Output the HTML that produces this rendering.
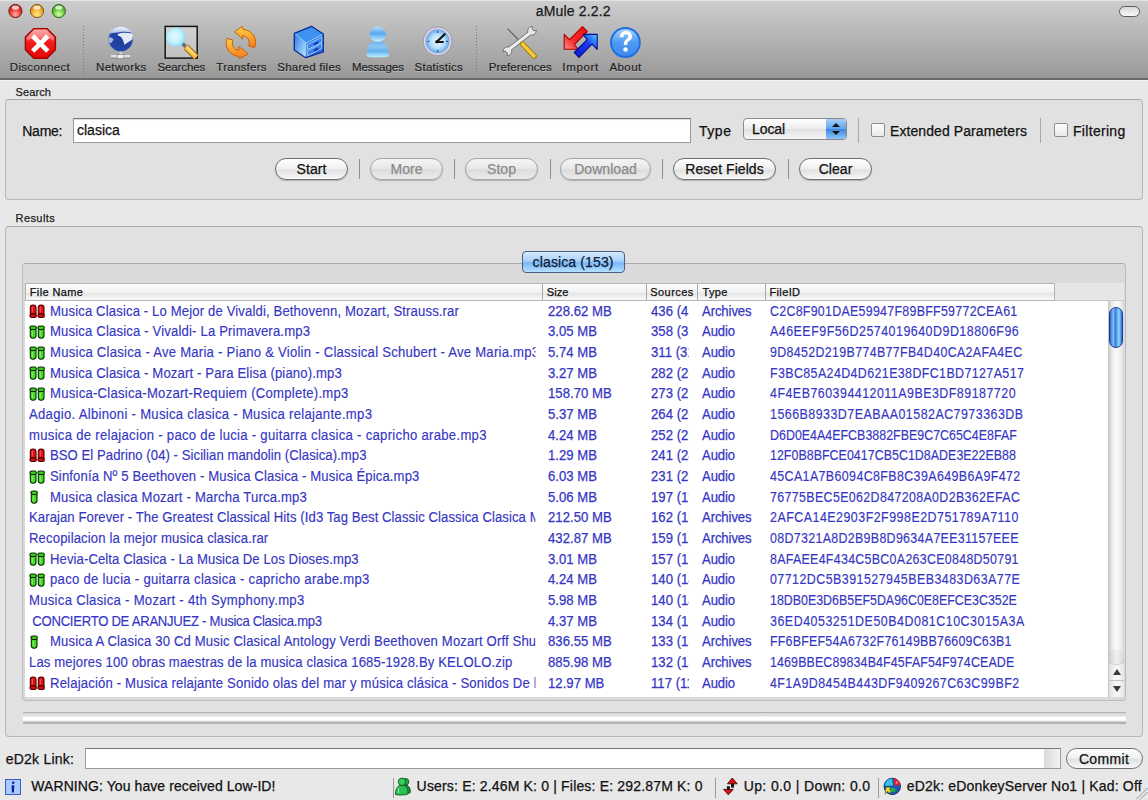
<!DOCTYPE html><html><head><meta charset="utf-8"><style>
*{box-sizing:border-box}
html,body{margin:0;padding:0}
body{width:1148px;height:800px;overflow:hidden;position:relative;background:#e8e8e8;font-family:"Liberation Sans",sans-serif}
.t{position:absolute;white-space:pre;line-height:normal;-webkit-text-stroke:0.25px currentColor}
.a{position:absolute}
</style></head><body>

<div class="a" style="left:0;top:0;width:1148px;height:78px;background:linear-gradient(#cdcdcd,#c3c3c3 20%,#a9a9a9 70%,#989898)"></div>
<div class="a" style="left:0;top:0;width:1148px;height:1px;background:#e4e4e4"></div>
<div class="a" style="left:0;top:78px;width:1148px;height:2px;background:#6a6a6a"></div>
<div class="a" style="left:0;top:80px;width:1148px;height:1px;background:#f2f2f2"></div>
<div class="t" style="left:535.80px;top:2.63px;font-size:14px;color:#1a1a1a;letter-spacing:0.170px;">aMule 2.2.2</div>
<svg class="a" style="left:0;top:0" width="80" height="22" viewBox="0 0 80 22"><defs><radialGradient id="tl1" cx="0.5" cy="0.75" r="0.7"><stop offset="0" stop-color="#ffb0a8"/><stop offset="0.55" stop-color="#e84038"/><stop offset="1" stop-color="#b81818"/></radialGradient><radialGradient id="tl2" cx="0.5" cy="0.75" r="0.7"><stop offset="0" stop-color="#ffe6a0"/><stop offset="0.55" stop-color="#f2b030"/><stop offset="1" stop-color="#d07a10"/></radialGradient><radialGradient id="tl3" cx="0.5" cy="0.75" r="0.7"><stop offset="0" stop-color="#d8ffb0"/><stop offset="0.55" stop-color="#72cc40"/><stop offset="1" stop-color="#3a9a18"/></radialGradient></defs><circle cx="15.4" cy="11" r="6.6" fill="url(#tl1)" stroke="#7a1a1a" stroke-width="1"/><ellipse cx="15.4" cy="7.6" rx="3.6" ry="2.2" fill="#fff" opacity="0.75"/><circle cx="37.0" cy="11" r="6.6" fill="url(#tl2)" stroke="#8a5a10" stroke-width="1"/><ellipse cx="37.0" cy="7.6" rx="3.6" ry="2.2" fill="#fff" opacity="0.75"/><circle cx="58.8" cy="11" r="6.6" fill="url(#tl3)" stroke="#2a6a18" stroke-width="1"/><ellipse cx="58.8" cy="7.6" rx="3.6" ry="2.2" fill="#fff" opacity="0.75"/></svg>
<div class="a" style="left:1119px;top:6px;width:21px;height:11px;border-radius:6px;border:1.5px solid #5a5a5a;background:linear-gradient(#d8d8d8,#fafafa)"></div>
<div class="t" style="left:9.75px;top:60.59px;font-size:11.5px;color:#1e1e1e;letter-spacing:0.338px;text-shadow:0 1px 0 rgba(255,255,255,.3);-webkit-text-stroke:0.2px currentColor;">Disconnect</div>
<div class="t" style="left:96.00px;top:60.59px;font-size:11.5px;color:#1e1e1e;letter-spacing:0.335px;text-shadow:0 1px 0 rgba(255,255,255,.3);-webkit-text-stroke:0.2px currentColor;">Networks</div>
<div class="t" style="left:157.60px;top:60.59px;font-size:11.5px;color:#1e1e1e;letter-spacing:-0.145px;text-shadow:0 1px 0 rgba(255,255,255,.3);-webkit-text-stroke:0.2px currentColor;">Searches</div>
<div class="t" style="left:216.30px;top:60.59px;font-size:11.5px;color:#1e1e1e;letter-spacing:0.264px;text-shadow:0 1px 0 rgba(255,255,255,.3);-webkit-text-stroke:0.2px currentColor;">Transfers</div>
<div class="t" style="left:277.30px;top:60.59px;font-size:11.5px;color:#1e1e1e;letter-spacing:0.250px;text-shadow:0 1px 0 rgba(255,255,255,.3);-webkit-text-stroke:0.2px currentColor;">Shared files</div>
<div class="t" style="left:351.90px;top:60.59px;font-size:11.5px;color:#1e1e1e;letter-spacing:-0.061px;text-shadow:0 1px 0 rgba(255,255,255,.3);-webkit-text-stroke:0.2px currentColor;">Messages</div>
<div class="t" style="left:414.60px;top:60.59px;font-size:11.5px;color:#1e1e1e;letter-spacing:0.240px;text-shadow:0 1px 0 rgba(255,255,255,.3);-webkit-text-stroke:0.2px currentColor;">Statistics</div>
<div class="t" style="left:488.80px;top:60.59px;font-size:11.5px;color:#1e1e1e;letter-spacing:0.103px;text-shadow:0 1px 0 rgba(255,255,255,.3);-webkit-text-stroke:0.2px currentColor;">Preferences</div>
<div class="t" style="left:562.30px;top:60.59px;font-size:11.5px;color:#1e1e1e;letter-spacing:0.673px;text-shadow:0 1px 0 rgba(255,255,255,.3);-webkit-text-stroke:0.2px currentColor;">Import</div>
<div class="t" style="left:609.40px;top:60.59px;font-size:11.5px;color:#1e1e1e;letter-spacing:0.434px;text-shadow:0 1px 0 rgba(255,255,255,.3);-webkit-text-stroke:0.2px currentColor;">About</div>
<div class="a" style="left:83px;top:26px;width:1px;height:50px;background:repeating-linear-gradient(#7c7c7c 0 1px,transparent 1px 3px)"></div>
<div class="a" style="left:476px;top:26px;width:1px;height:50px;background:repeating-linear-gradient(#7c7c7c 0 1px,transparent 1px 3px)"></div>
<svg class="a" style="left:0;top:0" width="660" height="78" viewBox="0 0 660 78">
<defs>
<linearGradient id="oct" x1="0" y1="0" x2="0" y2="1"><stop offset="0" stop-color="#ff8a8a"/><stop offset="0.45" stop-color="#f21d1d"/><stop offset="1" stop-color="#e40606"/></linearGradient>
<radialGradient id="globe" cx="0.5" cy="0.55" r="0.6"><stop offset="0" stop-color="#1e3c9c"/><stop offset="0.7" stop-color="#2446a6"/><stop offset="1" stop-color="#5a78c8"/></radialGradient>
<radialGradient id="lens" cx="0.45" cy="0.45" r="0.6"><stop offset="0" stop-color="#e4fbff"/><stop offset="0.6" stop-color="#bdf0fd"/><stop offset="1" stop-color="#7ad8f4"/></radialGradient>
<linearGradient id="orange" x1="0" y1="0" x2="0" y2="1"><stop offset="0" stop-color="#ffd04a"/><stop offset="1" stop-color="#f57a12"/></linearGradient>
<linearGradient id="cubeL" x1="0" y1="0" x2="1" y2="1"><stop offset="0" stop-color="#2a74e6"/><stop offset="1" stop-color="#c0ecff"/></linearGradient>
<linearGradient id="cubeR" x1="0" y1="0" x2="0" y2="1"><stop offset="0" stop-color="#3a88f0"/><stop offset="1" stop-color="#2462dc"/></linearGradient>
<linearGradient id="personB" x1="0" y1="0" x2="0" y2="1"><stop offset="0" stop-color="#6cb4f0"/><stop offset="0.3" stop-color="#8ccaf6"/><stop offset="0.6" stop-color="#64b2f0"/><stop offset="1" stop-color="#bcefff"/></linearGradient><linearGradient id="personH" x1="0" y1="0" x2="0" y2="1"><stop offset="0" stop-color="#b8dcfa"/><stop offset="0.45" stop-color="#5aa8ee"/><stop offset="1" stop-color="#c8f4ff"/></linearGradient>
<radialGradient id="clock" cx="0.5" cy="0.5" r="0.5"><stop offset="0" stop-color="#f2fbff"/><stop offset="0.6" stop-color="#b6defc"/><stop offset="1" stop-color="#62a8ea"/></radialGradient>
<linearGradient id="help" x1="0" y1="0" x2="0" y2="1"><stop offset="0" stop-color="#a9d3ff"/><stop offset="0.5" stop-color="#4e9af2"/><stop offset="1" stop-color="#3f8aee"/></linearGradient>
<linearGradient id="box" x1="0" y1="0" x2="0" y2="1"><stop offset="0" stop-color="#d2d2d2"/><stop offset="1" stop-color="#c2c2c2"/></linearGradient>
<linearGradient id="gcap" x1="0" y1="0" x2="0" y2="1"><stop offset="0" stop-color="#f2f6fc"/><stop offset="1" stop-color="#a9bbe6"/></linearGradient>
<linearGradient id="redA" x1="1" y1="0" x2="0" y2="1"><stop offset="0" stop-color="#ee1010"/><stop offset="0.6" stop-color="#f42a2a"/><stop offset="1" stop-color="#ff8a8a"/></linearGradient><linearGradient id="blueA" x1="0" y1="1" x2="1" y2="0"><stop offset="0" stop-color="#0a1ad0"/><stop offset="0.6" stop-color="#1a3af0"/><stop offset="1" stop-color="#50d0ff"/></linearGradient>
</defs>
<!-- Disconnect -->
<polygon points="33.8,28.6 47,28.6 55.4,37 55.4,49.8 47,58.2 33.8,58.2 25.4,49.8 25.4,37" fill="url(#oct)" stroke="#a30000" stroke-width="1.4"/>
<path d="M34.4 30 L46.4 30 L54 37.6 L54 41 C49 37.5 45 36.5 40.4 38.5 C36 36.5 31.5 37.5 26.8 41 L26.8 37.6 Z" fill="#fff" opacity="0.3"/>
<path d="M32.7 36 L47.8 51.1 M47.8 36 L32.7 51.1" stroke="#fff" stroke-width="4.6"/>
<!-- Networks globe -->
<rect x="119.5" y="50.5" width="2.6" height="5" fill="#d0d0d0"/>
<rect x="110.9" y="55" width="19.2" height="3.1" fill="#e2e2e2"/>
<rect x="110.9" y="57.6" width="19.2" height="0.8" fill="#6a6a6a"/>
<rect x="117.3" y="54.6" width="6.6" height="3.8" fill="#f0f0f0" stroke="#777" stroke-width="0.5"/>
<circle cx="120.75" cy="39.1" r="12.3" fill="url(#globe)"/>
<path d="M109.8 33.2 C111.5 28.8 116.5 26.8 121 26.8 C125.5 26.8 130 29 132.2 32.6 C128 31.8 124 31.6 120.5 32 C116.5 32.5 113 33.3 109.8 33.2 Z" fill="url(#gcap)"/>
<path d="M117.8 34 C121 32.6 127 32.3 132.5 33.8 C133 35.6 133 37.6 132.3 39.5 C130 41 127.2 42.6 124.5 44.8 C123.6 42.2 123.1 40.2 122.1 38.5 C121.2 37 119.8 36.2 117.8 35.6 Z" fill="#e2e9f7"/>
<path d="M108.7 37.6 C110.6 37 112.7 38 113.5 39.5 C112.7 41.3 111.2 42.8 110 43.6 C109 42 108.6 39.6 108.7 37.6 Z" fill="#aebde6"/>
<!-- Searches -->
<rect x="165.2" y="26.4" width="32" height="31.7" fill="url(#box)" stroke="#151515" stroke-width="1.5"/>
<path d="M186 47 L196.2 57.2" stroke="#9a6208" stroke-width="6.6"/>
<path d="M186 47 L196.2 57.2" stroke="#f4c048" stroke-width="4.6"/>
<path d="M186.5 46.5 L195.5 55.5" stroke="#ffe08a" stroke-width="1.4"/>
<path d="M182.3 43.3 L185.8 46.8" stroke="#6a6e7c" stroke-width="3.6"/>
<circle cx="175.8" cy="37.2" r="9.6" fill="url(#lens)"/>
<path d="M170 33.5 C171 31 173.5 29.8 176 30" stroke="#c0f0ff" stroke-width="1.2" fill="none"/>
<!-- Transfers -->
<g fill="url(#orange)" stroke="#c45800" stroke-width="0.9" stroke-linejoin="round">
<path d="M243 29.3 A13.2 13.2 0 0 1 254.6 47.6 L248.6 45.8 A7.2 7.2 0 0 0 242.6 35.7 L242.8 39.2 L234.8 31.8 L242.3 26.2 Z"/>
<path d="M238.6 56.3 A13.2 13.2 0 0 1 227 38.4 L233 40.2 A7.2 7.2 0 0 0 238.9 50.3 L238.6 46.4 L248 53.8 L239.6 58.6 Z"/>
</g>
<!-- Shared files cube -->
<polygon points="311.5,26.3 294.3,33.3 306,43 323.3,34" fill="#3f92f2"/>
<polygon points="294.3,33.3 306,43 305.6,57.7 294.3,50" fill="url(#cubeL)"/>
<polygon points="306,43 323.3,34 323.3,52 305.6,57.7" fill="url(#cubeR)"/>
<path d="M294.8 33.6 L306 43 L323 34.2 M306 43 L305.8 57.3" stroke="#9ad2ff" stroke-width="0.9" fill="none"/>
<polygon points="311.5,26.3 294.3,33.3 294.3,50 305.6,57.7 323.3,52 323.3,34" fill="none" stroke="#0a2a9a" stroke-width="1.3" stroke-linejoin="round"/>
<g stroke="#b0dcff" stroke-width="0.8">
<polygon points="307.6,44.6 321.8,37.2 321.8,42.2 307.6,49.6" fill="#3a7ee8"/>
<polygon points="307.6,50.8 321.8,43.4 321.8,48.4 307.6,55.8" fill="#3a7ee8"/>
</g>
<path d="M314 44.6 L318.2 42.4 M314 50.8 L318.2 48.6" stroke="#1233a8" stroke-width="1.8"/>
<!-- Messages person -->
<path d="M371.5 41.8 L383.5 41.8 C386.5 44 388.2 50 389 55 C389 57 386 57.3 377.7 57.3 C369.5 57.3 366.3 57 366.5 55 C367.2 50 368.8 44 371.5 41.8 Z" fill="url(#personB)"/>
<ellipse cx="377.8" cy="34.2" rx="8.3" ry="7.6" fill="url(#personH)"/>
<!-- Statistics clock -->
<circle cx="437.6" cy="41.3" r="14.4" fill="#d6d6e8" stroke="#8c8ca8" stroke-width="0.8"/>
<circle cx="437.6" cy="41.3" r="11.8" fill="url(#clock)" stroke="#9aa0c0" stroke-width="0.6"/>
<path d="M437.6 31 v2 M437.6 50 v2 M427.5 41.3 h2 M446 41.3 h2" stroke="#3050a0" stroke-width="1.2"/>
<path d="M436.8 41.8 L444.7 34.2 M436.8 41.8 L442.8 42" stroke="#111" stroke-width="2.2" stroke-linecap="round"/>
<circle cx="436.8" cy="41.8" r="1.6" fill="#111"/>
<!-- Preferences -->
<path d="M507.6 28.6 L522 43.5" stroke="#666" stroke-width="1.3"/>
<path d="M509.5 49 L530 33" stroke="#6a6a6a" stroke-width="4.6"/>
<path d="M536.27 30.28 A4.30 4.30 0 1 1 532.52 26.53 L531.97 29.00 L533.80 30.83 Z" fill="#e8e8e8" stroke="#6a6a6a" stroke-width="0.9"/>
<path d="M503.23 51.72 A4.30 4.30 0 1 1 506.98 55.47 L507.53 53.00 L505.70 51.17 Z" fill="#e8e8e8" stroke="#6a6a6a" stroke-width="0.9"/>
<path d="M509.5 49 L530 33" stroke="#eeeeee" stroke-width="3"/>
<path d="M522.5 44 L534 56" stroke="#9a7208" stroke-width="5.4" stroke-linecap="round"/>
<path d="M522.5 44 L534 56" stroke="#f4cc3a" stroke-width="3.6" stroke-linecap="round"/>
<!-- Import -->
<path d="M564.2 34.4 L569.5 39.7 L582.5 26.7 L587.3 31.5 L574.3 44.5 L578.2 49.3 L564.2 49.3 Z" fill="url(#redA)" stroke="#b00000" stroke-width="1.1" stroke-linejoin="round"/>
<path d="M597.2 34.4 L597.2 49.3 L592 44.2 L579 57.3 L574.3 52.5 L587.2 39.6 L583 34.4 Z" fill="url(#blueA)" stroke="#000a90" stroke-width="1.1" stroke-linejoin="round"/>
<!-- About -->
<circle cx="625.4" cy="42.5" r="15.4" fill="#1e6fe4"/>
<circle cx="625.4" cy="42.5" r="13.4" fill="url(#help)"/>
<path d="M619.8 37.2 C619.8 33.3 622.6 31 626 31 C629.6 31 632 33.2 632 36.5 C632 39.5 629.6 40.5 628.2 41.8 C627.3 42.6 627.3 43.5 627.3 45 L623.8 45 C623.8 42.6 624.2 41.2 625.8 39.8 C627.3 38.5 628.3 37.9 628.3 36.6 C628.3 35.2 627.4 34.3 626 34.3 C624.5 34.3 623.5 35.4 623.5 37.2 Z" fill="#fff"/>
<circle cx="625.5" cy="49.5" r="2.2" fill="#fff"/>
</svg>
<div class="t" style="left:15.60px;top:86.05px;font-size:11px;color:#222;letter-spacing:0.104px;">Search</div>
<div class="a" style="left:5px;top:99px;width:1138px;height:101px;border:1px solid #b8b8b8;border-top-color:#a9a9a9;border-radius:4px;background:#e1e1e1"></div>
<div class="t" style="left:22.25px;top:122.93px;font-size:14px;color:#111;letter-spacing:-0.244px;">Name:</div>
<div class="a" style="left:73px;top:118px;width:618px;height:25px;background:#fff;border:1px solid #9a9a9a;border-top-color:#777;box-shadow:inset 0 1px 1px rgba(0,0,0,.15)"></div>
<div class="t" style="left:76.90px;top:122.33px;font-size:14px;color:#111;letter-spacing:0.031px;">clasica</div>
<div class="t" style="left:699.00px;top:122.83px;font-size:14px;color:#111;letter-spacing:0.539px;">Type</div>
<div class="a" style="left:743px;top:118px;width:104px;height:22px;border-radius:4px;border:1px solid #8a8a8a;background:linear-gradient(#fff,#ececec 50%,#e0e0e0 51%,#f5f5f5)"></div>
<div class="a" style="left:826px;top:119px;width:20px;height:20px;border-radius:0 3px 3px 0;background:linear-gradient(#a9d0f8,#5ea3ec 50%,#3b86e0 51%,#8cc6f8)"></div>
<div class="a" style="left:832px;top:123px;width:0;height:0;border-left:4px solid transparent;border-right:4px solid transparent;border-bottom:4px solid #111"></div>
<div class="a" style="left:832px;top:131px;width:0;height:0;border-left:4px solid transparent;border-right:4px solid transparent;border-top:4px solid #111"></div>
<div class="t" style="left:752.00px;top:120.83px;font-size:14px;color:#111;letter-spacing:-0.091px;">Local</div>
<div class="a" style="left:858px;top:118px;width:1px;height:25px;background:#a8a8a8"></div>
<div class="a" style="left:1040px;top:118px;width:1px;height:25px;background:#a8a8a8"></div>
<div class="a" style="left:871px;top:123px;width:14px;height:14px;border:1px solid #8e8e8e;border-radius:2px;background:linear-gradient(#fdfdfd,#e9e9e9)"></div>
<div class="a" style="left:1054px;top:123px;width:14px;height:14px;border:1px solid #8e8e8e;border-radius:2px;background:linear-gradient(#fdfdfd,#e9e9e9)"></div>
<div class="t" style="left:890.00px;top:122.83px;font-size:14px;color:#111;letter-spacing:0.086px;">Extended Parameters</div>
<div class="t" style="left:1073.00px;top:122.83px;font-size:14px;color:#111;letter-spacing:0.304px;">Filtering</div>
<div class="a" style="left:275px;top:158px;width:73px;height:22px;border-radius:11px;border:1px solid #6e6e6e;background:linear-gradient(#ffffff,#f1f1f1 45%,#e2e2e2 55%,#f7f7f7);box-shadow:0 1px 1px rgba(0,0,0,.22)"></div>
<div class="t" style="left:275px;top:161.33px;width:73px;text-align:center;font-size:14px;color:#111;letter-spacing:0.05px">Start</div>
<div class="a" style="left:370px;top:158px;width:73px;height:22px;border-radius:11px;border:1px solid #a6a6a6;background:linear-gradient(#f4f4f4,#e9e9e9 45%,#dcdcdc 55%,#ececec);box-shadow:0 1px 1px rgba(0,0,0,.22)"></div>
<div class="t" style="left:370px;top:161.33px;width:73px;text-align:center;font-size:14px;color:#8a8a8a;letter-spacing:0.05px">More</div>
<div class="a" style="left:465px;top:158px;width:73px;height:22px;border-radius:11px;border:1px solid #a6a6a6;background:linear-gradient(#f4f4f4,#e9e9e9 45%,#dcdcdc 55%,#ececec);box-shadow:0 1px 1px rgba(0,0,0,.22)"></div>
<div class="t" style="left:465px;top:161.33px;width:73px;text-align:center;font-size:14px;color:#8a8a8a;letter-spacing:0.05px">Stop</div>
<div class="a" style="left:560px;top:158px;width:91px;height:22px;border-radius:11px;border:1px solid #a6a6a6;background:linear-gradient(#f4f4f4,#e9e9e9 45%,#dcdcdc 55%,#ececec);box-shadow:0 1px 1px rgba(0,0,0,.22)"></div>
<div class="t" style="left:560px;top:161.33px;width:91px;text-align:center;font-size:14px;color:#8a8a8a;letter-spacing:0.05px">Download</div>
<div class="a" style="left:673px;top:158px;width:103px;height:22px;border-radius:11px;border:1px solid #6e6e6e;background:linear-gradient(#ffffff,#f1f1f1 45%,#e2e2e2 55%,#f7f7f7);box-shadow:0 1px 1px rgba(0,0,0,.22)"></div>
<div class="t" style="left:673px;top:161.33px;width:103px;text-align:center;font-size:14px;color:#111;letter-spacing:0.05px">Reset Fields</div>
<div class="a" style="left:799px;top:158px;width:73px;height:22px;border-radius:11px;border:1px solid #6e6e6e;background:linear-gradient(#ffffff,#f1f1f1 45%,#e2e2e2 55%,#f7f7f7);box-shadow:0 1px 1px rgba(0,0,0,.22)"></div>
<div class="t" style="left:799px;top:161.33px;width:73px;text-align:center;font-size:14px;color:#111;letter-spacing:0.05px">Clear</div>
<div class="a" style="left:359px;top:159px;width:1px;height:20px;background:#8e8e8e"></div>
<div class="a" style="left:454px;top:159px;width:1px;height:20px;background:#8e8e8e"></div>
<div class="a" style="left:550px;top:159px;width:1px;height:20px;background:#8e8e8e"></div>
<div class="a" style="left:662px;top:159px;width:1px;height:20px;background:#8e8e8e"></div>
<div class="a" style="left:788px;top:159px;width:1px;height:20px;background:#8e8e8e"></div>
<div class="t" style="left:15.60px;top:212.04px;font-size:11px;color:#222;letter-spacing:0.402px;">Results</div>
<div class="a" style="left:5px;top:226px;width:1138px;height:511px;border:1px solid #b8b8b8;border-top-color:#a9a9a9;border-radius:4px;background:#e1e1e1"></div>
<div class="a" style="left:22px;top:263px;width:1104px;height:438px;border:1px solid #bcbcbc;border-top-color:#aaa;border-radius:4px;background:#dadada"></div>
<div class="a" style="left:522px;top:251px;width:103px;height:22px;border-radius:4px;border:1px solid #4a5f86;background:linear-gradient(#d6ebff,#a7d1fb 45%,#7bb8f6 55%,#b6e0ff)"></div>
<div class="t" style="left:532.60px;top:253.83px;font-size:14px;color:#0d1a33;letter-spacing:0.129px;">clasica (153)</div>
<div class="a" style="left:25px;top:283px;width:1099px;height:18px;background:#e6e6e6;border-bottom:1px solid #c8c8c8"></div>
<div class="a" style="left:25px;top:283px;width:1030px;height:18px;background:linear-gradient(#fdfdfd,#f2f2f2 50%,#e6e6e6 60%,#fafafa);border:1px solid #b4b4b4"></div>
<div class="a" style="left:542px;top:284px;width:1px;height:16px;background:#a8a8a8"></div>
<div class="a" style="left:646px;top:284px;width:1px;height:16px;background:#a8a8a8"></div>
<div class="a" style="left:697px;top:284px;width:1px;height:16px;background:#a8a8a8"></div>
<div class="a" style="left:765px;top:284px;width:1px;height:16px;background:#a8a8a8"></div>
<div class="t" style="left:29.75px;top:285.65px;font-size:11px;color:#111;letter-spacing:0.375px;">File Name</div>
<div class="t" style="left:546.80px;top:285.65px;font-size:11px;color:#111;letter-spacing:0.098px;">Size</div>
<div class="t" style="left:650.20px;top:285.65px;font-size:11px;color:#111;letter-spacing:0.461px;">Sources</div>
<div class="t" style="left:702.50px;top:285.65px;font-size:11px;color:#111;letter-spacing:0.335px;">Type</div>
<div class="t" style="left:769.40px;top:285.65px;font-size:11px;color:#111;letter-spacing:0.380px;">FileID</div>
<div class="a" style="left:25px;top:301px;width:1083px;height:396px;background:#fff"></div>
<div class="t" style="left:50.25px;top:299.81px;padding-top:4px;width:511.32px;overflow:hidden;font-size:13.8px;color:#3636c4;letter-spacing:0.145px;transform:scaleX(0.95);transform-origin:0 0;-webkit-text-stroke:0.15px currentColor">Musica Clasica - Lo Mejor de Vivaldi, Bethovenn, Mozart, Strauss.rar</div>
<div class="t" style="left:547.5px;top:303.81px;font-size:13.8px;color:#3636c4;letter-spacing:0.037px;transform:scaleX(0.95);transform-origin:0 0">228.62 MB</div>
<div class="t" style="left:651px;top:303.81px;width:40.21px;overflow:hidden;font-size:13.8px;color:#3636c4;letter-spacing:0.037px;transform:scaleX(0.95);transform-origin:0 0">436 (436)</div>
<div class="t" style="left:702px;top:303.81px;font-size:13.8px;color:#3636c4;letter-spacing:-0.102px;transform:scaleX(0.95);transform-origin:0 0">Archives</div>
<div class="t" style="left:769.5px;top:303.81px;font-size:13.8px;color:#3636c4;letter-spacing:0.302px;transform:scaleX(0.9);transform-origin:0 0;-webkit-text-stroke:0.15px currentColor">C2C8F901DAE59947F89BFF59772CEA61</div>
<svg class="a" style="left:29.00px;top:303.80px" width="9" height="15" viewBox="-1 -1 9 15"><rect x="0.3" y="0" width="5.7" height="10.5" rx="2.6" fill="#e41010" stroke="#4a0000" stroke-width="1.1"/><rect x="-0.1" y="8.9" width="6.5" height="3.6" rx="1.8" fill="#d80c0c" stroke="#4a0000" stroke-width="1.1"/><path d="M2.3 2 L2.3 7.5" stroke="#ff6a6a" stroke-width="0.9"/></svg>
<svg class="a" style="left:37.10px;top:303.80px" width="9" height="15" viewBox="-1 -1 9 15"><rect x="0.3" y="0" width="5.7" height="10.5" rx="2.6" fill="#e41010" stroke="#4a0000" stroke-width="1.1"/><rect x="-0.1" y="8.9" width="6.5" height="3.6" rx="1.8" fill="#d80c0c" stroke="#4a0000" stroke-width="1.1"/><path d="M2.3 2 L2.3 7.5" stroke="#ff6a6a" stroke-width="0.9"/></svg>
<div class="t" style="left:50.25px;top:320.47px;padding-top:4px;width:511.32px;overflow:hidden;font-size:13.8px;color:#3636c4;letter-spacing:0.173px;transform:scaleX(0.95);transform-origin:0 0;-webkit-text-stroke:0.15px currentColor">Musica Clasica - Vivaldi- La Primavera.mp3</div>
<div class="t" style="left:547.5px;top:324.47px;font-size:13.8px;color:#3636c4;letter-spacing:0.037px;transform:scaleX(0.95);transform-origin:0 0">3.05 MB</div>
<div class="t" style="left:651px;top:324.47px;width:40.21px;overflow:hidden;font-size:13.8px;color:#3636c4;letter-spacing:0.037px;transform:scaleX(0.95);transform-origin:0 0">358 (358)</div>
<div class="t" style="left:702px;top:324.47px;font-size:13.8px;color:#3636c4;letter-spacing:-0.102px;transform:scaleX(0.95);transform-origin:0 0">Audio</div>
<div class="t" style="left:769.5px;top:324.47px;font-size:13.8px;color:#3636c4;letter-spacing:0.553px;transform:scaleX(0.9);transform-origin:0 0;-webkit-text-stroke:0.15px currentColor">A46EEF9F56D2574019640D9D18806F96</div>
<svg class="a" style="left:29.00px;top:324.96px" width="9" height="15" viewBox="-1 -1 9 15"><rect x="0.3" y="1.8" width="5.7" height="10.4" rx="2.6" fill="#44dc22" stroke="#082a00" stroke-width="1.1"/><rect x="-0.1" y="0" width="6.5" height="3.5" rx="1.8" fill="#3ccc1e" stroke="#082a00" stroke-width="1.1"/><path d="M2.3 5 L2.3 10" stroke="#9af080" stroke-width="0.9"/></svg>
<svg class="a" style="left:37.10px;top:324.96px" width="9" height="15" viewBox="-1 -1 9 15"><rect x="0.3" y="1.8" width="5.7" height="10.4" rx="2.6" fill="#44dc22" stroke="#082a00" stroke-width="1.1"/><rect x="-0.1" y="0" width="6.5" height="3.5" rx="1.8" fill="#3ccc1e" stroke="#082a00" stroke-width="1.1"/><path d="M2.3 5 L2.3 10" stroke="#9af080" stroke-width="0.9"/></svg>
<div class="t" style="left:50.25px;top:341.13px;padding-top:4px;width:511.32px;overflow:hidden;font-size:13.8px;color:#3636c4;letter-spacing:0.256px;transform:scaleX(0.95);transform-origin:0 0;-webkit-text-stroke:0.15px currentColor">Musica Clasica - Ave Maria - Piano &amp; Violin - Classical Schubert - Ave Maria.mp3</div>
<div class="t" style="left:547.5px;top:345.13px;font-size:13.8px;color:#3636c4;letter-spacing:0.037px;transform:scaleX(0.95);transform-origin:0 0">5.74 MB</div>
<div class="t" style="left:651px;top:345.13px;width:40.21px;overflow:hidden;font-size:13.8px;color:#3636c4;letter-spacing:0.037px;transform:scaleX(0.95);transform-origin:0 0">311 (311)</div>
<div class="t" style="left:702px;top:345.13px;font-size:13.8px;color:#3636c4;letter-spacing:-0.102px;transform:scaleX(0.95);transform-origin:0 0">Audio</div>
<div class="t" style="left:769.5px;top:345.13px;font-size:13.8px;color:#3636c4;letter-spacing:0.379px;transform:scaleX(0.9);transform-origin:0 0;-webkit-text-stroke:0.15px currentColor">9D8452D219B774B77FB4D40CA2AFA4EC</div>
<svg class="a" style="left:29.00px;top:345.62px" width="9" height="15" viewBox="-1 -1 9 15"><rect x="0.3" y="1.8" width="5.7" height="10.4" rx="2.6" fill="#44dc22" stroke="#082a00" stroke-width="1.1"/><rect x="-0.1" y="0" width="6.5" height="3.5" rx="1.8" fill="#3ccc1e" stroke="#082a00" stroke-width="1.1"/><path d="M2.3 5 L2.3 10" stroke="#9af080" stroke-width="0.9"/></svg>
<svg class="a" style="left:37.10px;top:345.62px" width="9" height="15" viewBox="-1 -1 9 15"><rect x="0.3" y="1.8" width="5.7" height="10.4" rx="2.6" fill="#44dc22" stroke="#082a00" stroke-width="1.1"/><rect x="-0.1" y="0" width="6.5" height="3.5" rx="1.8" fill="#3ccc1e" stroke="#082a00" stroke-width="1.1"/><path d="M2.3 5 L2.3 10" stroke="#9af080" stroke-width="0.9"/></svg>
<div class="t" style="left:50.25px;top:361.79px;padding-top:4px;width:511.32px;overflow:hidden;font-size:13.8px;color:#3636c4;letter-spacing:0.157px;transform:scaleX(0.95);transform-origin:0 0;-webkit-text-stroke:0.15px currentColor">Musica Clasica - Mozart - Para Elisa (piano).mp3</div>
<div class="t" style="left:547.5px;top:365.79px;font-size:13.8px;color:#3636c4;letter-spacing:0.037px;transform:scaleX(0.95);transform-origin:0 0">3.27 MB</div>
<div class="t" style="left:651px;top:365.79px;width:40.21px;overflow:hidden;font-size:13.8px;color:#3636c4;letter-spacing:0.037px;transform:scaleX(0.95);transform-origin:0 0">282 (282)</div>
<div class="t" style="left:702px;top:365.79px;font-size:13.8px;color:#3636c4;letter-spacing:-0.102px;transform:scaleX(0.95);transform-origin:0 0">Audio</div>
<div class="t" style="left:769.5px;top:365.79px;font-size:13.8px;color:#3636c4;letter-spacing:0.439px;transform:scaleX(0.9);transform-origin:0 0;-webkit-text-stroke:0.15px currentColor">F3BC85A24D4D621E38DFC1BD7127A517</div>
<svg class="a" style="left:29.00px;top:366.28px" width="9" height="15" viewBox="-1 -1 9 15"><rect x="0.3" y="1.8" width="5.7" height="10.4" rx="2.6" fill="#44dc22" stroke="#082a00" stroke-width="1.1"/><rect x="-0.1" y="0" width="6.5" height="3.5" rx="1.8" fill="#3ccc1e" stroke="#082a00" stroke-width="1.1"/><path d="M2.3 5 L2.3 10" stroke="#9af080" stroke-width="0.9"/></svg>
<svg class="a" style="left:37.10px;top:366.28px" width="9" height="15" viewBox="-1 -1 9 15"><rect x="0.3" y="1.8" width="5.7" height="10.4" rx="2.6" fill="#44dc22" stroke="#082a00" stroke-width="1.1"/><rect x="-0.1" y="0" width="6.5" height="3.5" rx="1.8" fill="#3ccc1e" stroke="#082a00" stroke-width="1.1"/><path d="M2.3 5 L2.3 10" stroke="#9af080" stroke-width="0.9"/></svg>
<div class="t" style="left:50.25px;top:382.45px;padding-top:4px;width:511.32px;overflow:hidden;font-size:13.8px;color:#3636c4;letter-spacing:0.261px;transform:scaleX(0.95);transform-origin:0 0;-webkit-text-stroke:0.15px currentColor">Musica-Clasica-Mozart-Requiem (Complete).mp3</div>
<div class="t" style="left:547.5px;top:386.45px;font-size:13.8px;color:#3636c4;letter-spacing:0.037px;transform:scaleX(0.95);transform-origin:0 0">158.70 MB</div>
<div class="t" style="left:651px;top:386.45px;width:40.21px;overflow:hidden;font-size:13.8px;color:#3636c4;letter-spacing:0.037px;transform:scaleX(0.95);transform-origin:0 0">273 (273)</div>
<div class="t" style="left:702px;top:386.45px;font-size:13.8px;color:#3636c4;letter-spacing:-0.102px;transform:scaleX(0.95);transform-origin:0 0">Audio</div>
<div class="t" style="left:769.5px;top:386.45px;font-size:13.8px;color:#3636c4;letter-spacing:0.544px;transform:scaleX(0.9);transform-origin:0 0;-webkit-text-stroke:0.15px currentColor">4F4EB760394412011A9BE3DF89187720</div>
<svg class="a" style="left:29.00px;top:386.94px" width="9" height="15" viewBox="-1 -1 9 15"><rect x="0.3" y="1.8" width="5.7" height="10.4" rx="2.6" fill="#44dc22" stroke="#082a00" stroke-width="1.1"/><rect x="-0.1" y="0" width="6.5" height="3.5" rx="1.8" fill="#3ccc1e" stroke="#082a00" stroke-width="1.1"/><path d="M2.3 5 L2.3 10" stroke="#9af080" stroke-width="0.9"/></svg>
<svg class="a" style="left:37.10px;top:386.94px" width="9" height="15" viewBox="-1 -1 9 15"><rect x="0.3" y="1.8" width="5.7" height="10.4" rx="2.6" fill="#44dc22" stroke="#082a00" stroke-width="1.1"/><rect x="-0.1" y="0" width="6.5" height="3.5" rx="1.8" fill="#3ccc1e" stroke="#082a00" stroke-width="1.1"/><path d="M2.3 5 L2.3 10" stroke="#9af080" stroke-width="0.9"/></svg>
<div class="t" style="left:29.40px;top:403.11px;padding-top:4px;width:533.26px;overflow:hidden;font-size:13.8px;color:#3636c4;letter-spacing:0.303px;transform:scaleX(0.95);transform-origin:0 0;-webkit-text-stroke:0.15px currentColor">Adagio. Albinoni - Musica clasica - Musica relajante.mp3</div>
<div class="t" style="left:547.5px;top:407.11px;font-size:13.8px;color:#3636c4;letter-spacing:0.037px;transform:scaleX(0.95);transform-origin:0 0">5.37 MB</div>
<div class="t" style="left:651px;top:407.11px;width:40.21px;overflow:hidden;font-size:13.8px;color:#3636c4;letter-spacing:0.037px;transform:scaleX(0.95);transform-origin:0 0">264 (264)</div>
<div class="t" style="left:702px;top:407.11px;font-size:13.8px;color:#3636c4;letter-spacing:-0.102px;transform:scaleX(0.95);transform-origin:0 0">Audio</div>
<div class="t" style="left:769.5px;top:407.11px;font-size:13.8px;color:#3636c4;letter-spacing:0.532px;transform:scaleX(0.9);transform-origin:0 0;-webkit-text-stroke:0.15px currentColor">1566B8933D7EABAA01582AC7973363DB</div>
<div class="t" style="left:29.40px;top:423.77px;padding-top:4px;width:533.26px;overflow:hidden;font-size:13.8px;color:#3636c4;letter-spacing:0.306px;transform:scaleX(0.95);transform-origin:0 0;-webkit-text-stroke:0.15px currentColor">musica de relajacion - paco de lucia - guitarra clasica - capricho arabe.mp3</div>
<div class="t" style="left:547.5px;top:427.77px;font-size:13.8px;color:#3636c4;letter-spacing:0.037px;transform:scaleX(0.95);transform-origin:0 0">4.24 MB</div>
<div class="t" style="left:651px;top:427.77px;width:40.21px;overflow:hidden;font-size:13.8px;color:#3636c4;letter-spacing:0.037px;transform:scaleX(0.95);transform-origin:0 0">252 (252)</div>
<div class="t" style="left:702px;top:427.77px;font-size:13.8px;color:#3636c4;letter-spacing:-0.102px;transform:scaleX(0.95);transform-origin:0 0">Audio</div>
<div class="t" style="left:769.5px;top:427.77px;font-size:13.8px;color:#3636c4;letter-spacing:0.013px;transform:scaleX(0.9);transform-origin:0 0;-webkit-text-stroke:0.15px currentColor">D6D0E4A4EFCB3882FBE9C7C65C4E8FAF</div>
<div class="t" style="left:50.25px;top:444.43px;padding-top:4px;width:511.32px;overflow:hidden;font-size:13.8px;color:#3636c4;letter-spacing:0.065px;transform:scaleX(0.95);transform-origin:0 0;-webkit-text-stroke:0.15px currentColor">BSO El Padrino (04) - Sicilian mandolin (Clasica).mp3</div>
<div class="t" style="left:547.5px;top:448.43px;font-size:13.8px;color:#3636c4;letter-spacing:0.037px;transform:scaleX(0.95);transform-origin:0 0">1.29 MB</div>
<div class="t" style="left:651px;top:448.43px;width:40.21px;overflow:hidden;font-size:13.8px;color:#3636c4;letter-spacing:0.037px;transform:scaleX(0.95);transform-origin:0 0">241 (241)</div>
<div class="t" style="left:702px;top:448.43px;font-size:13.8px;color:#3636c4;letter-spacing:-0.102px;transform:scaleX(0.95);transform-origin:0 0">Audio</div>
<div class="t" style="left:769.5px;top:448.43px;font-size:13.8px;color:#3636c4;letter-spacing:0.033px;transform:scaleX(0.9);transform-origin:0 0;-webkit-text-stroke:0.15px currentColor">12F0B8BFCE0417CB5C1D8ADE3E22EB88</div>
<svg class="a" style="left:29.00px;top:448.42px" width="9" height="15" viewBox="-1 -1 9 15"><rect x="0.3" y="0" width="5.7" height="10.5" rx="2.6" fill="#e41010" stroke="#4a0000" stroke-width="1.1"/><rect x="-0.1" y="8.9" width="6.5" height="3.6" rx="1.8" fill="#d80c0c" stroke="#4a0000" stroke-width="1.1"/><path d="M2.3 2 L2.3 7.5" stroke="#ff6a6a" stroke-width="0.9"/></svg>
<svg class="a" style="left:37.10px;top:448.42px" width="9" height="15" viewBox="-1 -1 9 15"><rect x="0.3" y="0" width="5.7" height="10.5" rx="2.6" fill="#e41010" stroke="#4a0000" stroke-width="1.1"/><rect x="-0.1" y="8.9" width="6.5" height="3.6" rx="1.8" fill="#d80c0c" stroke="#4a0000" stroke-width="1.1"/><path d="M2.3 2 L2.3 7.5" stroke="#ff6a6a" stroke-width="0.9"/></svg>
<div class="t" style="left:50.25px;top:465.09px;padding-top:4px;width:511.32px;overflow:hidden;font-size:13.8px;color:#3636c4;letter-spacing:0.138px;transform:scaleX(0.95);transform-origin:0 0;-webkit-text-stroke:0.15px currentColor">Sinfonía Nº 5 Beethoven - Musica Clasica - Musica Épica.mp3</div>
<div class="t" style="left:547.5px;top:469.09px;font-size:13.8px;color:#3636c4;letter-spacing:0.037px;transform:scaleX(0.95);transform-origin:0 0">6.03 MB</div>
<div class="t" style="left:651px;top:469.09px;width:40.21px;overflow:hidden;font-size:13.8px;color:#3636c4;letter-spacing:0.037px;transform:scaleX(0.95);transform-origin:0 0">231 (231)</div>
<div class="t" style="left:702px;top:469.09px;font-size:13.8px;color:#3636c4;letter-spacing:-0.102px;transform:scaleX(0.95);transform-origin:0 0">Audio</div>
<div class="t" style="left:769.5px;top:469.09px;font-size:13.8px;color:#3636c4;letter-spacing:0.429px;transform:scaleX(0.9);transform-origin:0 0;-webkit-text-stroke:0.15px currentColor">45CA1A7B6094C8FB8C39A649B6A9F472</div>
<svg class="a" style="left:29.00px;top:469.58px" width="9" height="15" viewBox="-1 -1 9 15"><rect x="0.3" y="1.8" width="5.7" height="10.4" rx="2.6" fill="#44dc22" stroke="#082a00" stroke-width="1.1"/><rect x="-0.1" y="0" width="6.5" height="3.5" rx="1.8" fill="#3ccc1e" stroke="#082a00" stroke-width="1.1"/><path d="M2.3 5 L2.3 10" stroke="#9af080" stroke-width="0.9"/></svg>
<svg class="a" style="left:37.10px;top:469.58px" width="9" height="15" viewBox="-1 -1 9 15"><rect x="0.3" y="1.8" width="5.7" height="10.4" rx="2.6" fill="#44dc22" stroke="#082a00" stroke-width="1.1"/><rect x="-0.1" y="0" width="6.5" height="3.5" rx="1.8" fill="#3ccc1e" stroke="#082a00" stroke-width="1.1"/><path d="M2.3 5 L2.3 10" stroke="#9af080" stroke-width="0.9"/></svg>
<div class="t" style="left:50.25px;top:485.75px;padding-top:4px;width:511.32px;overflow:hidden;font-size:13.8px;color:#3636c4;letter-spacing:0.189px;transform:scaleX(0.95);transform-origin:0 0;-webkit-text-stroke:0.15px currentColor">Musica clasica Mozart - Marcha Turca.mp3</div>
<div class="t" style="left:547.5px;top:489.75px;font-size:13.8px;color:#3636c4;letter-spacing:0.037px;transform:scaleX(0.95);transform-origin:0 0">5.06 MB</div>
<div class="t" style="left:651px;top:489.75px;width:40.21px;overflow:hidden;font-size:13.8px;color:#3636c4;letter-spacing:0.037px;transform:scaleX(0.95);transform-origin:0 0">197 (197)</div>
<div class="t" style="left:702px;top:489.75px;font-size:13.8px;color:#3636c4;letter-spacing:-0.102px;transform:scaleX(0.95);transform-origin:0 0">Audio</div>
<div class="t" style="left:769.5px;top:489.75px;font-size:13.8px;color:#3636c4;letter-spacing:0.394px;transform:scaleX(0.9);transform-origin:0 0;-webkit-text-stroke:0.15px currentColor">76775BEC5E062D847208A0D2B362EFAC</div>
<svg class="a" style="left:29.50px;top:490.24px" width="9" height="15" viewBox="-1 -1 9 15"><rect x="0.3" y="1.8" width="5.7" height="10.4" rx="2.6" fill="#44dc22" stroke="#082a00" stroke-width="1.1"/><rect x="-0.1" y="0" width="6.5" height="3.5" rx="1.8" fill="#3ccc1e" stroke="#082a00" stroke-width="1.1"/><path d="M2.3 5 L2.3 10" stroke="#9af080" stroke-width="0.9"/></svg>
<div class="t" style="left:29.40px;top:506.41px;padding-top:4px;width:533.26px;overflow:hidden;font-size:13.8px;color:#3636c4;letter-spacing:0.081px;transform:scaleX(0.95);transform-origin:0 0;-webkit-text-stroke:0.15px currentColor">Karajan Forever - The Greatest Classical Hits (Id3 Tag Best Classic Classica Clasica M</div>
<div class="t" style="left:547.5px;top:510.41px;font-size:13.8px;color:#3636c4;letter-spacing:0.037px;transform:scaleX(0.95);transform-origin:0 0">212.50 MB</div>
<div class="t" style="left:651px;top:510.41px;width:40.21px;overflow:hidden;font-size:13.8px;color:#3636c4;letter-spacing:0.037px;transform:scaleX(0.95);transform-origin:0 0">162 (162)</div>
<div class="t" style="left:702px;top:510.41px;font-size:13.8px;color:#3636c4;letter-spacing:-0.102px;transform:scaleX(0.95);transform-origin:0 0">Archives</div>
<div class="t" style="left:769.5px;top:510.41px;font-size:13.8px;color:#3636c4;letter-spacing:0.546px;transform:scaleX(0.9);transform-origin:0 0;-webkit-text-stroke:0.15px currentColor">2AFCA14E2903F2F998E2D751789A7110</div>
<div class="t" style="left:29.40px;top:527.07px;padding-top:4px;width:533.26px;overflow:hidden;font-size:13.8px;color:#3636c4;letter-spacing:0.146px;transform:scaleX(0.95);transform-origin:0 0;-webkit-text-stroke:0.15px currentColor">Recopilacion la mejor musica clasica.rar</div>
<div class="t" style="left:547.5px;top:531.07px;font-size:13.8px;color:#3636c4;letter-spacing:0.037px;transform:scaleX(0.95);transform-origin:0 0">432.87 MB</div>
<div class="t" style="left:651px;top:531.07px;width:40.21px;overflow:hidden;font-size:13.8px;color:#3636c4;letter-spacing:0.037px;transform:scaleX(0.95);transform-origin:0 0">159 (159)</div>
<div class="t" style="left:702px;top:531.07px;font-size:13.8px;color:#3636c4;letter-spacing:-0.102px;transform:scaleX(0.95);transform-origin:0 0">Archives</div>
<div class="t" style="left:769.5px;top:531.07px;font-size:13.8px;color:#3636c4;letter-spacing:0.353px;transform:scaleX(0.9);transform-origin:0 0;-webkit-text-stroke:0.15px currentColor">08D7321A8D2B9B8D9634A7EE31157EEE</div>
<div class="t" style="left:50.25px;top:547.73px;padding-top:4px;width:511.32px;overflow:hidden;font-size:13.8px;color:#3636c4;letter-spacing:0.089px;transform:scaleX(0.95);transform-origin:0 0;-webkit-text-stroke:0.15px currentColor">Hevia-Celta Clasica - La Musica De Los Dioses.mp3</div>
<div class="t" style="left:547.5px;top:551.73px;font-size:13.8px;color:#3636c4;letter-spacing:0.037px;transform:scaleX(0.95);transform-origin:0 0">3.01 MB</div>
<div class="t" style="left:651px;top:551.73px;width:40.21px;overflow:hidden;font-size:13.8px;color:#3636c4;letter-spacing:0.037px;transform:scaleX(0.95);transform-origin:0 0">157 (157)</div>
<div class="t" style="left:702px;top:551.73px;font-size:13.8px;color:#3636c4;letter-spacing:-0.102px;transform:scaleX(0.95);transform-origin:0 0">Audio</div>
<div class="t" style="left:769.5px;top:551.73px;font-size:13.8px;color:#3636c4;letter-spacing:0.322px;transform:scaleX(0.9);transform-origin:0 0;-webkit-text-stroke:0.15px currentColor">8AFAEE4F434C5BC0A263CE0848D50791</div>
<svg class="a" style="left:29.00px;top:552.22px" width="9" height="15" viewBox="-1 -1 9 15"><rect x="0.3" y="1.8" width="5.7" height="10.4" rx="2.6" fill="#44dc22" stroke="#082a00" stroke-width="1.1"/><rect x="-0.1" y="0" width="6.5" height="3.5" rx="1.8" fill="#3ccc1e" stroke="#082a00" stroke-width="1.1"/><path d="M2.3 5 L2.3 10" stroke="#9af080" stroke-width="0.9"/></svg>
<svg class="a" style="left:37.10px;top:552.22px" width="9" height="15" viewBox="-1 -1 9 15"><rect x="0.3" y="1.8" width="5.7" height="10.4" rx="2.6" fill="#44dc22" stroke="#082a00" stroke-width="1.1"/><rect x="-0.1" y="0" width="6.5" height="3.5" rx="1.8" fill="#3ccc1e" stroke="#082a00" stroke-width="1.1"/><path d="M2.3 5 L2.3 10" stroke="#9af080" stroke-width="0.9"/></svg>
<div class="t" style="left:50.25px;top:568.39px;padding-top:4px;width:511.32px;overflow:hidden;font-size:13.8px;color:#3636c4;letter-spacing:0.299px;transform:scaleX(0.95);transform-origin:0 0;-webkit-text-stroke:0.15px currentColor">paco de lucia - guitarra clasica - capricho arabe.mp3</div>
<div class="t" style="left:547.5px;top:572.39px;font-size:13.8px;color:#3636c4;letter-spacing:0.037px;transform:scaleX(0.95);transform-origin:0 0">4.24 MB</div>
<div class="t" style="left:651px;top:572.39px;width:40.21px;overflow:hidden;font-size:13.8px;color:#3636c4;letter-spacing:0.037px;transform:scaleX(0.95);transform-origin:0 0">140 (140)</div>
<div class="t" style="left:702px;top:572.39px;font-size:13.8px;color:#3636c4;letter-spacing:-0.102px;transform:scaleX(0.95);transform-origin:0 0">Audio</div>
<div class="t" style="left:769.5px;top:572.39px;font-size:13.8px;color:#3636c4;letter-spacing:0.517px;transform:scaleX(0.9);transform-origin:0 0;-webkit-text-stroke:0.15px currentColor">07712DC5B391527945BEB3483D63A77E</div>
<svg class="a" style="left:29.00px;top:572.88px" width="9" height="15" viewBox="-1 -1 9 15"><rect x="0.3" y="1.8" width="5.7" height="10.4" rx="2.6" fill="#44dc22" stroke="#082a00" stroke-width="1.1"/><rect x="-0.1" y="0" width="6.5" height="3.5" rx="1.8" fill="#3ccc1e" stroke="#082a00" stroke-width="1.1"/><path d="M2.3 5 L2.3 10" stroke="#9af080" stroke-width="0.9"/></svg>
<svg class="a" style="left:37.10px;top:572.88px" width="9" height="15" viewBox="-1 -1 9 15"><rect x="0.3" y="1.8" width="5.7" height="10.4" rx="2.6" fill="#44dc22" stroke="#082a00" stroke-width="1.1"/><rect x="-0.1" y="0" width="6.5" height="3.5" rx="1.8" fill="#3ccc1e" stroke="#082a00" stroke-width="1.1"/><path d="M2.3 5 L2.3 10" stroke="#9af080" stroke-width="0.9"/></svg>
<div class="t" style="left:29.40px;top:589.05px;padding-top:4px;width:533.26px;overflow:hidden;font-size:13.8px;color:#3636c4;letter-spacing:0.302px;transform:scaleX(0.95);transform-origin:0 0;-webkit-text-stroke:0.15px currentColor">Musica Clasica - Mozart - 4th Symphony.mp3</div>
<div class="t" style="left:547.5px;top:593.05px;font-size:13.8px;color:#3636c4;letter-spacing:0.037px;transform:scaleX(0.95);transform-origin:0 0">5.98 MB</div>
<div class="t" style="left:651px;top:593.05px;width:40.21px;overflow:hidden;font-size:13.8px;color:#3636c4;letter-spacing:0.037px;transform:scaleX(0.95);transform-origin:0 0">140 (140)</div>
<div class="t" style="left:702px;top:593.05px;font-size:13.8px;color:#3636c4;letter-spacing:-0.102px;transform:scaleX(0.95);transform-origin:0 0">Audio</div>
<div class="t" style="left:769.5px;top:593.05px;font-size:13.8px;color:#3636c4;letter-spacing:-0.007px;transform:scaleX(0.9);transform-origin:0 0;-webkit-text-stroke:0.15px currentColor">18DB0E3D6B5EF5DA96C0E8EFCE3C352E</div>
<div class="t" style="left:29.40px;top:609.71px;padding-top:4px;width:533.26px;overflow:hidden;font-size:13.8px;color:#3636c4;letter-spacing:-0.289px;transform:scaleX(0.95);transform-origin:0 0;-webkit-text-stroke:0.15px currentColor"> CONCIERTO DE ARANJUEZ - Musica Clasica.mp3</div>
<div class="t" style="left:547.5px;top:613.71px;font-size:13.8px;color:#3636c4;letter-spacing:0.037px;transform:scaleX(0.95);transform-origin:0 0">4.37 MB</div>
<div class="t" style="left:651px;top:613.71px;width:40.21px;overflow:hidden;font-size:13.8px;color:#3636c4;letter-spacing:0.037px;transform:scaleX(0.95);transform-origin:0 0">134 (134)</div>
<div class="t" style="left:702px;top:613.71px;font-size:13.8px;color:#3636c4;letter-spacing:-0.102px;transform:scaleX(0.95);transform-origin:0 0">Audio</div>
<div class="t" style="left:769.5px;top:613.71px;font-size:13.8px;color:#3636c4;letter-spacing:0.577px;transform:scaleX(0.9);transform-origin:0 0;-webkit-text-stroke:0.15px currentColor">36ED4053251DE50B4D081C10C3015A3A</div>
<div class="t" style="left:50.25px;top:630.37px;padding-top:4px;width:511.32px;overflow:hidden;font-size:13.8px;color:#3636c4;letter-spacing:0.156px;transform:scaleX(0.95);transform-origin:0 0;-webkit-text-stroke:0.15px currentColor">Musica A Clasica 30 Cd Music Clasical Antology Verdi Beethoven Mozart Orff Shu</div>
<div class="t" style="left:547.5px;top:634.37px;font-size:13.8px;color:#3636c4;letter-spacing:0.037px;transform:scaleX(0.95);transform-origin:0 0">836.55 MB</div>
<div class="t" style="left:651px;top:634.37px;width:40.21px;overflow:hidden;font-size:13.8px;color:#3636c4;letter-spacing:0.037px;transform:scaleX(0.95);transform-origin:0 0">133 (133)</div>
<div class="t" style="left:702px;top:634.37px;font-size:13.8px;color:#3636c4;letter-spacing:-0.102px;transform:scaleX(0.95);transform-origin:0 0">Archives</div>
<div class="t" style="left:769.5px;top:634.37px;font-size:13.8px;color:#3636c4;letter-spacing:0.244px;transform:scaleX(0.9);transform-origin:0 0;-webkit-text-stroke:0.15px currentColor">FF6BFEF54A6732F76149BB76609C63B1</div>
<svg class="a" style="left:29.50px;top:634.86px" width="9" height="15" viewBox="-1 -1 9 15"><rect x="0.3" y="1.8" width="5.7" height="10.4" rx="2.6" fill="#44dc22" stroke="#082a00" stroke-width="1.1"/><rect x="-0.1" y="0" width="6.5" height="3.5" rx="1.8" fill="#3ccc1e" stroke="#082a00" stroke-width="1.1"/><path d="M2.3 5 L2.3 10" stroke="#9af080" stroke-width="0.9"/></svg>
<div class="t" style="left:29.40px;top:651.03px;padding-top:4px;width:533.26px;overflow:hidden;font-size:13.8px;color:#3636c4;letter-spacing:0.138px;transform:scaleX(0.95);transform-origin:0 0;-webkit-text-stroke:0.15px currentColor">Las mejores 100 obras maestras de la musica clasica 1685-1928.By KELOLO.zip</div>
<div class="t" style="left:547.5px;top:655.03px;font-size:13.8px;color:#3636c4;letter-spacing:0.037px;transform:scaleX(0.95);transform-origin:0 0">885.98 MB</div>
<div class="t" style="left:651px;top:655.03px;width:40.21px;overflow:hidden;font-size:13.8px;color:#3636c4;letter-spacing:0.037px;transform:scaleX(0.95);transform-origin:0 0">132 (132)</div>
<div class="t" style="left:702px;top:655.03px;font-size:13.8px;color:#3636c4;letter-spacing:-0.102px;transform:scaleX(0.95);transform-origin:0 0">Archives</div>
<div class="t" style="left:769.5px;top:655.03px;font-size:13.8px;color:#3636c4;letter-spacing:0.143px;transform:scaleX(0.9);transform-origin:0 0;-webkit-text-stroke:0.15px currentColor">1469BBEC89834B4F45FAF54F974CEADE</div>
<div class="t" style="left:50.25px;top:671.69px;padding-top:4px;width:511.32px;overflow:hidden;font-size:13.8px;color:#3636c4;letter-spacing:0.182px;transform:scaleX(0.95);transform-origin:0 0;-webkit-text-stroke:0.15px currentColor">Relajación - Musica relajante Sonido olas del mar y música clásica - Sonidos De l</div>
<div class="t" style="left:547.5px;top:675.69px;font-size:13.8px;color:#3636c4;letter-spacing:0.037px;transform:scaleX(0.95);transform-origin:0 0">12.97 MB</div>
<div class="t" style="left:651px;top:675.69px;width:40.21px;overflow:hidden;font-size:13.8px;color:#3636c4;letter-spacing:0.037px;transform:scaleX(0.95);transform-origin:0 0">117 (117)</div>
<div class="t" style="left:702px;top:675.69px;font-size:13.8px;color:#3636c4;letter-spacing:-0.102px;transform:scaleX(0.95);transform-origin:0 0">Audio</div>
<div class="t" style="left:769.5px;top:675.69px;font-size:13.8px;color:#3636c4;letter-spacing:0.490px;transform:scaleX(0.9);transform-origin:0 0;-webkit-text-stroke:0.15px currentColor">4F1A9D8454B443DF9409267C63C99BF2</div>
<svg class="a" style="left:29.00px;top:675.68px" width="9" height="15" viewBox="-1 -1 9 15"><rect x="0.3" y="0" width="5.7" height="10.5" rx="2.6" fill="#e41010" stroke="#4a0000" stroke-width="1.1"/><rect x="-0.1" y="8.9" width="6.5" height="3.6" rx="1.8" fill="#d80c0c" stroke="#4a0000" stroke-width="1.1"/><path d="M2.3 2 L2.3 7.5" stroke="#ff6a6a" stroke-width="0.9"/></svg>
<svg class="a" style="left:37.10px;top:675.68px" width="9" height="15" viewBox="-1 -1 9 15"><rect x="0.3" y="0" width="5.7" height="10.5" rx="2.6" fill="#e41010" stroke="#4a0000" stroke-width="1.1"/><rect x="-0.1" y="8.9" width="6.5" height="3.6" rx="1.8" fill="#d80c0c" stroke="#4a0000" stroke-width="1.1"/><path d="M2.3 2 L2.3 7.5" stroke="#ff6a6a" stroke-width="0.9"/></svg>
<div class="a" style="left:1108px;top:301px;width:16px;height:396px;background:linear-gradient(90deg,#cfcfcf,#efefef 25%,#fbfbfb 50%,#f0f0f0 75%,#d8d8d8);border-left:1px solid #c4c4c4"></div>
<div class="a" style="left:1109px;top:664px;width:15px;height:33px;background:linear-gradient(90deg,#dedede,#f6f6f6 40%,#f8f8f8 60%,#e4e4e4)"></div>
<div class="a" style="left:1109px;top:650px;width:15px;height:14px;border-radius:0 0 7px 7px;background:linear-gradient(90deg,#d0d0d0,#ececec 40%,#eeeeee 60%,#d8d8d8);box-shadow:0 1px 1px rgba(0,0,0,.18)"></div>
<div class="a" style="left:1109px;top:680px;width:15px;height:1px;background:#c4c4c4"></div>
<div class="a" style="left:1112.5px;top:668.5px;width:0;height:0;border-left:4px solid transparent;border-right:4px solid transparent;border-bottom:6px solid #3a3a3a"></div>
<div class="a" style="left:1112.5px;top:686px;width:0;height:0;border-left:4px solid transparent;border-right:4px solid transparent;border-top:6px solid #3a3a3a"></div>
<div class="a" style="left:1108.5px;top:307px;width:14px;height:41px;border-radius:7px;border:1.5px solid #173f98;background:linear-gradient(90deg,#2a62cc,#6aa4ec 18%,#8cbcf4 32%,#2f74dc 42%,#5ea8f2 58%,#94d4ff 76%,#2c66d0)"></div>
<div class="a" style="left:22.5px;top:712px;width:1103px;height:12px;background:linear-gradient(#b0b0b0 0 1px,#d6d6d6 1px,#e2e2e2 4px,#fbfbfb 5px,#ffffff 8px,#ececec 9px,#b6b6b6 10px,#b0b0b0 12px)"></div>
<div class="t" style="left:5.70px;top:750.93px;font-size:14px;color:#111;letter-spacing:0.237px;">eD2k Link:</div>
<div class="a" style="left:85px;top:748px;width:976px;height:21px;background:#fff;border:1px solid #9a9a9a;border-top-color:#777"></div>
<div class="a" style="left:1044px;top:749px;width:16px;height:19px;background:linear-gradient(90deg,#d8d8d8,#f4f4f4)"></div>
<div class="a" style="left:1066px;top:748px;width:77px;height:21px;border-radius:11px;border:1px solid #6e6e6e;background:linear-gradient(#ffffff,#f1f1f1 45%,#e2e2e2 55%,#f7f7f7)"></div>
<div class="t" style="left:1078.90px;top:751.13px;font-size:14px;color:#111;letter-spacing:0.349px;">Commit</div>
<div class="t" style="left:31.30px;top:778.43px;font-size:14px;color:#111;letter-spacing:0.081px;">WARNING: You have received Low-ID!</div>
<div class="t" style="left:416.60px;top:778.43px;font-size:14px;color:#111;letter-spacing:0.172px;">Users: E: 2.46M K: 0 | Files: E: 292.87M K: 0</div>
<div class="t" style="left:743.70px;top:778.43px;font-size:14px;color:#111;letter-spacing:0.381px;">Up: 0.0 | Down: 0.0</div>
<div class="t" style="left:906.80px;top:778.43px;font-size:14px;color:#111;letter-spacing:0.174px;">eD2k: eDonkeyServer No1 | Kad: Off</div>
<div class="a" style="left:393px;top:778px;width:1px;height:20px;background:#9a9a9a"></div>
<div class="a" style="left:715px;top:778px;width:1px;height:20px;background:#9a9a9a"></div>
<div class="a" style="left:878px;top:778px;width:1px;height:20px;background:#9a9a9a"></div>
<svg class="a" style="left:0;top:770px" width="1148" height="30" viewBox="0 770 1148 30">
<rect x="5.5" y="779.5" width="15" height="15" fill="#a9c9ff" stroke="#3a5fc8" stroke-width="1"/>
<circle cx="13.2" cy="782.8" r="1.3" fill="#0a1aa0"/>
<path d="M11.6 785.3 L14.3 785.3 L13.9 792.6 L11.9 792.6 Z" fill="#0a1aa0"/>
<path d="M400.5 793.5 C400.5 789 402.5 786 405.5 785.5 L407 785.5 C409.5 786.5 410.5 789 410.3 792.5 C409 793.8 403 794 400.5 793.5 Z" fill="#1a9a3a" stroke="#0a4a18" stroke-width="0.9"/>
<circle cx="405.5" cy="781.8" r="3.3" fill="#22aa44" stroke="#0a4a18" stroke-width="0.9"/>
<path d="M395.5 794.6 C395.3 790 397 786.2 400 785.6 L404.5 785.6 C407.5 786.5 408.2 790 408 794 C405 795.2 398.5 795.3 395.5 794.6 Z" fill="#2cc052" stroke="#0a5a20" stroke-width="0.9"/>
<circle cx="402" cy="781.8" r="3.7" fill="#34cc5c" stroke="#0a5a20" stroke-width="0.9"/>
<path d="M398.5 788 L398.5 793" stroke="#9af0b0" stroke-width="1"/>
<rect x="731" y="783" width="3" height="4.6" fill="#1a1a1a"/>
<rect x="726.9" y="786.2" width="3" height="3.8" fill="#1a1a1a"/>
<path d="M732.3 778 L737.2 783.8 L727.4 783.8 Z" fill="#e01010" stroke="#2a0000" stroke-width="0.8" stroke-linejoin="round"/>
<path d="M728.3 794.8 L733.2 789.4 L723.4 789.4 Z" fill="#e01010" stroke="#2a0000" stroke-width="0.8" stroke-linejoin="round"/>
<circle cx="892.3" cy="786.4" r="8.2" fill="#1c58b0" stroke="#0a2a60" stroke-width="0.9"/>
<path d="M885 784 C886 780.5 889 778.6 892 778.4 L893 785.5 L885.5 786 Z" fill="#30c4e6"/>
<path d="M893.5 778.6 C897 779 899.8 781.5 900.3 785 L894.5 785.5 Z" fill="#e41a28"/>
<path d="M896.5 780.5 L898.5 783 L895.5 784.2 Z" fill="#ff8080"/>
<path d="M890.5 788.5 C892.5 787.5 895 788 896 790 C895 792 892 792.8 890.5 791.5 Z" fill="#22b050"/>
<path d="M885.2 794.2 L885.8 787.2 L891.2 787.2 L889.6 789.2 L891.2 791.6 L889.2 793.4 L887.8 791.2 Z" fill="#f2e020" stroke="#333" stroke-width="0.5"/>
<path d="M1136 799.5 L1147.5 788 M1140 799.5 L1147.5 792" stroke="#8a8a8a" stroke-width="0.9"/>
</svg>
</body></html>
